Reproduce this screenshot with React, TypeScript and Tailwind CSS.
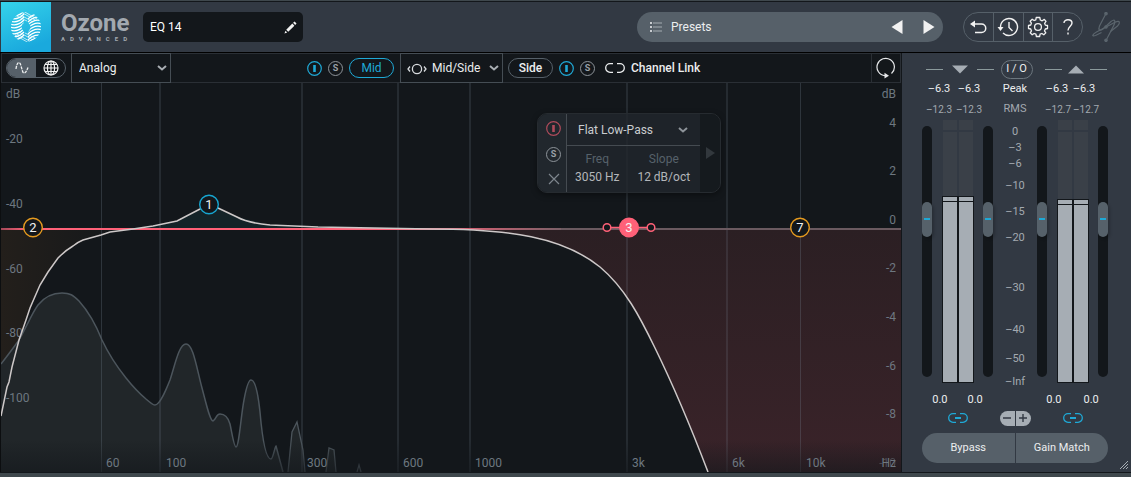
import { useState } from "react";

const freqGrid = [
  { x: 101, label: "60", tx: 106 },
  { x: 159, label: "100", tx: 166, wide: true },
  { x: 301, label: "300", tx: 307, wide: true },
  { x: 397, label: "600", tx: 403, wide: true },
  { x: 469, label: "1000", tx: 475, wide: true },
  { x: 626, label: "3k", tx: 632, wide: true },
  { x: 726, label: "6k", tx: 732, wide: true },
  { x: 800, label: "10k", tx: 806 },
];

const leftScale = [
  { y: 98, label: "dB" },
  { y: 143, label: "-20" },
  { y: 208, label: "-40" },
  { y: 273, label: "-60" },
  { y: 337, label: "-80" },
  { y: 402, label: "-100" },
];

const rightScale = [
  { y: 98, label: "dB" },
  { y: 127, label: "4" },
  { y: 175, label: "2" },
  { y: 224, label: "0" },
  { y: 272, label: "-2" },
  { y: 321, label: "-4" },
  { y: 370, label: "-6" },
  { y: 418, label: "-8" },
];

// gap is the share of the meter height above each label
const meterScale = [
  { label: "0", gap: 18 },
  { label: "–3", gap: 16 },
  { label: "–6", gap: 16 },
  { label: "–10", gap: 22 },
  { label: "–15", gap: 26 },
  { label: "–20", gap: 26 },
  { label: "–30", gap: 50 },
  { label: "–40", gap: 42 },
  { label: "–50", gap: 29 },
  { label: "–Inf", gap: 23 },
];

const spectrum =
  "M1 364 C8 355 14 347 19 340 C26 328 32 313 38 305 C46 295 55 293 62 293 C70 293 73 295 79 301 C88 311 96 325 102 340 C110 357 118 368 126 378 C134 388 140 394 146 399 C150 402 152 405 155 405 C160 405 166 390 170 380 C175 365 179 344 186 344 C193 344 196 365 202 388 C206 403 210 421 213 421 C216 420 216 414 220 414 C224 414 228 417 230 424 C232 433 234 447 236 447 C239 447 241 415 244 400 C246 389 248 380 251 380 C255 380 258 393 260 412 C262 435 265 459 271 459 C273 459 275 446 276 446 L283 472";

const curve =
  "M1 416 L7 387 L9 382 L12 367 L19 340 L26 320 L30 308 L40 285 L48 272 L58 258 Q66 250 73 246 Q78 242 83 240 L101 235 L110 232 L133 229 L153 226 L177 221 L200 209 Q209 203 218 208 L237 217 Q248 223 270 225 L318 227 L430 229 C510 229 563 237 600 267 C625 288 640 317 655 348 C678 395 692 430 708 472";

const thumb =
  "[&::-webkit-slider-thumb]:appearance-none [&::-webkit-slider-thumb]:w-[10px] [&::-webkit-slider-thumb]:h-[35px] [&::-webkit-slider-thumb]:rounded-full [&::-webkit-slider-thumb]:bg-[#56616a] [&::-webkit-slider-thumb]:bg-[linear-gradient(#1fa9d6,#1fa9d6)] [&::-webkit-slider-thumb]:bg-[length:6px_2px] [&::-webkit-slider-thumb]:bg-center [&::-webkit-slider-thumb]:bg-no-repeat [&::-webkit-slider-thumb]:shadow-[2px_2px_3px_#0003]";

function Chevron({ className }: { className: string }) {
  return (
    <svg className={className} width="10" height="6" viewBox="0 0 10 6" fill="none" stroke="currentColor" strokeWidth="2">
      <path d="M1 1 L5 4.5 L9 1" />
    </svg>
  );
}

function PowerButton({ label, className = "text-[#1fa9d6]" }: { label: string; className?: string }) {
  return (
    <button aria-label={label} className={className}>
      <svg width="15" height="15" viewBox="0 0 15 15" fill="none" stroke="currentColor">
        <circle cx="7.5" cy="7.5" r="6.8" strokeWidth="1.2" />
        <path d="M7.5 4 V11" strokeWidth="2.6" />
      </svg>
    </button>
  );
}

function SoloButton({ label }: { label: string }) {
  return (
    <button
      aria-label={label}
      className="w-[15px] h-[15px] rounded-full border border-[#8d9399] text-[#9aa0a6] text-[9px] leading-[13px] font-bold"
    >
      S
    </button>
  );
}

function OzoneLogo() {
  const rows = [-13, -10, -7, -4, -1, 2, 5, 8, 11];
  return (
    <svg width="50" height="50" viewBox="0 0 50 50">
      <defs>
        <linearGradient id="logoBg" x1="0" y1="0" x2="0.4" y2="1">
          <stop offset="0" stopColor="#35d3ea" />
          <stop offset="1" stopColor="#1aa9dd" />
        </linearGradient>
        <mask id="ring">
          <circle cx="25" cy="25" r="15" fill="white" />
          <circle cx="25" cy="25" r="4.5" fill="black" />
        </mask>
      </defs>
      <rect width="50" height="50" fill="url(#logoBg)" />
      <g mask="url(#ring)" fill="none" stroke="white" strokeWidth="1.3">
        {rows.map((r) => (
          <path key={r} d={`M9 ${26 + r} C14 ${28 + r} 18 ${27 + r} 23 ${22 + r}`} />
        ))}
        {rows.map((r) => (
          <path key={r} d={`M41 ${24 - r} C36 ${22 - r} 32 ${23 - r} 27 ${28 - r}`} />
        ))}
        <g strokeWidth="0.7">
          <path d="M20 10 L34 18 M22 9 L36 17 M18 12 L32 20 M16 14 L26 19" />
          <path d="M30 40 L16 32 M28 41 L14 33 M32 38 L18 30 M34 36 L24 31" />
        </g>
      </g>
    </svg>
  );
}

function LinkIcon({ active = false }: { active?: boolean }) {
  return (
    <svg width="20" height="10" viewBox="0 0 20 10" fill="none" stroke="currentColor" strokeWidth="1.3">
      <path d="M8 0.7 H5 A4.3 4.3 0 0 0 5 9.3 H8 M12 0.7 H15 A4.3 4.3 0 0 1 15 9.3 H12" />
      {active && <path d="M7 5 H13" strokeWidth="2" />}
    </svg>
  );
}

function Header() {
  const [preset, setPreset] = useState("EQ 14");
  return (
    <header className="flex items-center h-[50px] pl-px pr-[10px] bg-[#323943]">
      <OzoneLogo />
      <div className="w-[82px] ml-[10px] text-[#a3a9b0]">
        <div className="font-bold text-[24px] leading-[24px]">Ozone</div>
        <div className="text-[6px] leading-[8px] font-bold tracking-[5px]">ADVANCED</div>
      </div>
      <div className="flex items-center w-[160px] h-[30px] pl-[7px] pr-[6px] rounded-[5px] bg-[#13171b]">
        <input
          aria-label="Preset name"
          value={preset}
          onChange={(e) => setPreset(e.target.value)}
          className="flex-1 min-w-0 bg-transparent text-[12px] text-white outline-none"
        />
        <button aria-label="Rename">
          <svg width="13" height="13" viewBox="0 0 14 14" fill="#f2f2f2">
            <path d="M0.5 13.5 L1.6 10.6 L3.4 12.4 Z M2.4 9.4 L9 2.8 L11.2 5 L4.6 11.6 Z M9.8 2 L11.4 0.5 L13.5 2.6 L12 4.2 Z" />
          </svg>
        </button>
      </div>
      <div className="flex items-center w-[306px] h-[30px] ml-auto px-2 pl-[13px] rounded-full bg-[#566069]">
        <button className="flex items-center gap-[9px] text-[12px] text-[#eceeef]">
          <svg width="12" height="10" viewBox="0 0 12 10">
            <path d="M0 1 H2 M0 5 H2 M0 9 H2" stroke="#c8ccd0" strokeWidth="2" />
            <path d="M3 1 H12 M3 5 H12 M3 9 H12" stroke="#8b9299" strokeWidth="1.4" />
          </svg>
          Presets
        </button>
        <button aria-label="Previous preset" className="ml-auto">
          <svg width="12" height="14" viewBox="0 0 12 14" fill="#f2f2f2">
            <path d="M11.5 0 V14 L0.5 7 Z" />
          </svg>
        </button>
        <button aria-label="Next preset" className="ml-5">
          <svg width="12" height="14" viewBox="0 0 12 14" fill="#f2f2f2">
            <path d="M0.5 0 V14 L11.5 7 Z" />
          </svg>
        </button>
      </div>
      <div className="flex w-[120px] h-[30px] ml-5 rounded-full border border-[#566069] divide-x divide-[#566069] text-[#f2f2f2]">
        <button aria-label="Undo" className="flex-1 flex items-center justify-center">
          <svg width="18" height="14" viewBox="0 0 18 14" fill="none" stroke="currentColor" strokeWidth="1.5">
            <path d="M3 4 H12.5 A4 4 0 0 1 12.5 12.5 H6" />
            <path d="M1 4 L6 0.5 V7.5 Z" fill="currentColor" stroke="none" />
          </svg>
        </button>
        <button aria-label="History" className="flex-1 flex items-center justify-center">
          <svg width="22" height="20" viewBox="0 0 22 20" fill="none" stroke="currentColor" strokeWidth="1.4">
            <path d="M3.5 10 A8.5 8.5 0 1 1 6 16" />
            <path d="M0.5 10 H6.5 L3.5 14 Z" fill="currentColor" stroke="none" />
            <path d="M12 5 V10.5 L15.5 14" />
          </svg>
        </button>
        <button aria-label="Settings" className="flex-1 flex items-center justify-center">
          <svg width="22" height="22" viewBox="0 0 22 22" fill="none" stroke="currentColor" strokeWidth="1.3" strokeLinejoin="round">
            <circle cx="11" cy="11" r="3.4" />
            <path d="M9.2 1.5 H12.8 L13.3 4 L15.2 4.8 L17.3 3.4 L19 5.4 L17.6 7.3 L18.3 9.1 L20.5 9.5 V12.5 L18.3 13 L17.5 14.9 L18.8 16.9 L16.8 18.8 L14.9 17.5 L13.1 18.2 L12.6 20.5 H9.4 L8.9 18.2 L7.1 17.5 L5.2 18.8 L3.2 16.8 L4.5 14.9 L3.7 13 L1.5 12.5 V9.5 L3.7 9 L4.4 7.1 L3.1 5.2 L5.2 3.2 L7.1 4.5 L8.8 3.8 Z" />
          </svg>
        </button>
        <button aria-label="Help" className="flex-1 flex items-center justify-center">
          <svg width="10" height="16" viewBox="0 0 10 16" fill="none" stroke="currentColor" strokeWidth="1.4">
            <path d="M1 4 C1 -0.3 9 -0.3 9 4 C9 7 5 7.5 5 11.5 M5 13.5 V15.5" />
          </svg>
        </button>
      </div>
      <svg className="ml-2" width="30" height="30" viewBox="0 0 30 30" fill="none" stroke="#5b656d" strokeWidth="1.2">
        <path d="M15 1.5 L8.5 14 C7 18 8.5 19.5 12 17 L20 9.5 C24 6.5 25 9 22.5 14 L15 28.5" />
        <path d="M15 15 L24.5 10 C29 8 29.5 11 26.5 14 L19.5 19.5" />
        <path d="M15 15 L5.5 20 C1 22.5 0.5 25 4.5 23.5 L10.5 20.5" />
        <circle cx="15" cy="1.7" r="1.2" fill="#5b656d" />
        <circle cx="15" cy="28.3" r="1.2" fill="#5b656d" />
        <circle cx="15" cy="15" r="1.2" fill="#5b656d" />
      </svg>
    </header>
  );
}

function Toolbar() {
  return (
    <div className="flex items-center h-[30px] border border-[#2a2f35] bg-[#13171b] text-[12px] text-[#eceeef]">
      <div className="flex w-[60px] h-5 ml-1 rounded-full border border-[#566069] overflow-hidden">
        <button aria-label="Curve view" className="flex-1 flex items-center justify-center bg-[#566069]">
          <svg width="14" height="12" viewBox="0 0 14 12" fill="none" stroke="#eceeef" strokeWidth="1.3">
            <path d="M1 7 C2 -1 5 -1 6 4 L7.5 9 C8.5 13 11 11 13 5.5" strokeDasharray="3 1" />
          </svg>
        </button>
        <button aria-label="Global view" className="flex-1 flex items-center justify-center">
          <svg width="16" height="16" viewBox="0 0 16 16" fill="none" stroke="#f2f2f2" strokeWidth="1.2">
            <circle cx="8" cy="8" r="7" />
            <ellipse cx="8" cy="8" rx="3.6" ry="7" />
            <path d="M8 1 V15 M1 8 H15 M2 4.5 H14 M2 11.5 H14" />
          </svg>
        </button>
      </div>
      <div className="relative w-[100px] h-[30px] ml-[5px]">
        <select aria-label="EQ mode" className="appearance-none w-full h-full pl-[7px] bg-transparent border border-[#454d54]">
          <option>Analog</option>
        </select>
        <Chevron className="absolute right-1 top-3 pointer-events-none text-[#a9aeb3]" />
      </div>
      <div className="flex items-center ml-[136px]">
        <PowerButton label="Mid on" />
        <span className="ml-[6px] flex">
          <SoloButton label="Solo mid" />
        </span>
        <button className="w-[45px] h-5 ml-[6px] rounded-full border border-[#1fa9d6] text-[#1fa9d6] leading-[18px]">Mid</button>
        <div className="relative w-[103px] h-[30px] ml-[6px]">
          <svg className="absolute left-[7px] top-[10px] pointer-events-none" width="20" height="12" viewBox="0 0 20 12" fill="none" stroke="#d8dbde" strokeWidth="1.3">
            <circle cx="10" cy="6" r="4.6" />
            <path d="M3 3.5 L1 6 L3 8.5 M17 3.5 L19 6 L17 8.5" />
          </svg>
          <select aria-label="Channel mode" className="appearance-none w-full h-full pl-[31px] bg-transparent border border-[#454d54]">
            <option>Mid/Side</option>
          </select>
          <Chevron className="absolute right-1 top-3 pointer-events-none text-[#a9aeb3]" />
        </div>
        <button className="w-[45px] h-5 ml-[5px] rounded-full border border-[#566069] font-medium leading-[18px]">Side</button>
        <span className="ml-[6px] flex gap-[6px]">
          <PowerButton label="Side on" />
          <SoloButton label="Solo side" />
        </span>
        <button className="flex items-center gap-[6px] ml-[10px] font-medium">
          <LinkIcon />
          Channel Link
        </button>
      </div>
      <button aria-label="Reset" className="flex items-center justify-center w-[29px] h-[30px] ml-auto border-l border-[#2a2f35]">
        <svg width="20" height="22" viewBox="0 0 20 22" fill="none" stroke="#e6e8ea" strokeWidth="1.2">
          <path d="M15.5 16.5 A8.7 8.7 0 1 0 9 18.7" />
          <path d="M8.5 15.8 L13 18.7 L8.5 21.5 Z" fill="#e6e8ea" stroke="none" />
        </svg>
      </button>
    </div>
  );
}

function EqNode({ x, y = 227, n, color, filled = false }: { x: number; y?: number; n: string; color: string; filled?: boolean }) {
  return (
    <g>
      <circle cx={x} cy={y + 0.5} r="9.3" fill={filled ? color : "#13171b"} stroke={color} strokeWidth="1.4" />
      <text x={x} y={y + 5} textAnchor="middle" fontSize="13" fill="#f2f2f2">
        {n}
      </text>
    </g>
  );
}

function FilterPanel() {
  return (
    <div className="absolute left-[536px] top-[30px] flex w-[184px] h-[80px] rounded-[10px] border border-[#262b30] shadow-[0_2px_6px_#0006] overflow-hidden text-[12px]">
      <div className="flex flex-col items-center justify-between w-[29px] py-[7px] pl-[3px] bg-[#262c32]/80 border-r border-[#454b51]">
        <PowerButton label="Band on" className="text-[#b04b5b]" />
        <SoloButton label="Solo band" />
        <button aria-label="Remove band">
          <svg width="12" height="12" viewBox="0 0 12 12" stroke="#7d858c" strokeWidth="1.2">
            <path d="M1 1 L11 11 M11 1 L1 11" />
          </svg>
        </button>
      </div>
      <div className="flex-1 bg-[#22272d]/80">
        <div className="relative h-[32px] border-b border-[#454b51]">
          <select aria-label="Filter type" className="appearance-none w-full h-full pl-[11px] bg-transparent text-[#c9cccf]">
            <option>Flat Low-Pass</option>
          </select>
          <Chevron className="absolute right-3 top-[13px] pointer-events-none text-[#8d9399]" />
        </div>
        <div className="grid grid-cols-2 pt-[4px] text-center leading-[18px]">
          <label htmlFor="freq" className="text-[#56616a] pr-[6px]">Freq</label>
          <label htmlFor="slope" className="text-[#56616a] pr-[6px]">Slope</label>
          <input id="freq" defaultValue="3050 Hz" className="w-full min-w-0 pr-[6px] bg-transparent text-center text-[#b3b6b9]" />
          <input id="slope" defaultValue="12 dB/oct" className="w-full min-w-0 pr-[6px] bg-transparent text-center text-[#b3b6b9]" />
        </div>
      </div>
      <button aria-label="More" className="flex items-center pl-[6px] w-[20px] bg-[#171b1f]/80">
        <svg width="9" height="12" viewBox="0 0 9 12" fill="#32383d">
          <path d="M0 0 V12 L9 6 Z" />
        </svg>
      </button>
    </div>
  );
}

function Spectrum() {
  return (
    <div className="relative">
      <svg className="block w-full h-auto" viewBox="1 83 900 389" fontFamily="Roboto, sans-serif">
        <defs>
          <linearGradient id="lowPass" x1="0" y1="0" x2="0" y2="1">
            <stop offset="0" stopColor="#2b1f23" />
            <stop offset="1" stopColor="#3a2329" />
          </linearGradient>
          <linearGradient id="fade" x1="0" y1="0" x2="0" y2="1">
            <stop offset="0" stopColor="#13171b" stopOpacity="0" />
            <stop offset="1" stopColor="#13171b" stopOpacity="0.6" />
          </linearGradient>
          <linearGradient id="lowCut" x1="0" y1="0" x2="1" y2="0">
            <stop offset="0" stopColor="#231f1b" />
            <stop offset="1" stopColor="#13171b" />
          </linearGradient>
          <linearGradient id="baseLine" gradientUnits="userSpaceOnUse" x1="0" y1="0" x2="560" y2="0">
            <stop offset="0" stopColor="#a04858" />
            <stop offset="0.05" stopColor="#ff6178" />
            <stop offset="0.75" stopColor="#ff6178" />
            <stop offset="1" stopColor="#7c6068" />
          </linearGradient>
        </defs>
        <rect x="1" y="83" width="900" height="389" fill="#13171b" />
        <path d="M1 229 H133 L101 235 L83 240 L73 246 L58 258 L48 272 L40 285 L30 308 L19 340 L7 387 L1 416 Z" fill="url(#lowCut)" />
        <path d="M140 228 L177 221 L200 209 L209 204 L218 208 L237 217 L270 225 L300 228 Z" fill="#142328" />
        <path d="M430 229 C510 229 563 237 600 267 C625 288 640 317 655 348 C678 395 692 430 708 472 H901 V229 Z" fill="url(#lowPass)" />
        <path d={spectrum + " L1 472 Z"} fill="#212629" />
        <path d="M288 472 L292 432 L297 422 L303 450 L305 472 Z M326 472 L329 448 L334 450 L336 472 Z" fill="#212629" />
        {freqGrid.map((g) => (
          <rect key={g.x} x={g.x} y="83" width={g.wide ? 2 : 1} height="389" fill="#8090a0" opacity={g.wide ? 0.17 : 0.25} />
        ))}
        <g fontSize="12" fill="#6d7780">
          {leftScale.map((s) => (
            <text key={s.label} x="6" y={s.y}>{s.label}</text>
          ))}
          {rightScale.map((s) => (
            <text key={s.label} x="896" y={s.y} textAnchor="end">{s.label}</text>
          ))}
        </g>
        <path d={spectrum} fill="none" stroke="#4c555c" strokeWidth="1.5" />
        <path d="M288 472 L292 432 L297 422 L303 450 L305 472 M326 472 L329 448 L334 450 L336 472 M357 472 L359 465 L361 472" fill="none" stroke="#4c555c" strokeWidth="1.3" />
        <rect x="1" y="440" width="900" height="32" fill="url(#fade)" />
        <g fontSize="12" fill="#6d7780">
          {freqGrid.map((g) => (
            <text key={g.x} x={g.tx} y="467">{g.label}</text>
          ))}
          <text x="896" y="467" textAnchor="end" opacity="0.5">-10</text>
          <text x="896" y="467" textAnchor="end">Hz</text>
        </g>
        <rect x="1" y="228" width="900" height="2" fill="#6b5a60" />
        <rect x="1" y="228" width="560" height="2" fill="url(#baseLine)" />
        <path d={curve} fill="none" stroke="#cdc8c8" strokeWidth="1.5" />
        <g stroke="#ff6178" strokeWidth="1.5">
          <path d="M611 227.5 H647" />
          <circle cx="607" cy="227.5" r="3.8" fill="#13171b" />
          <circle cx="651" cy="227.5" r="3.8" fill="#13171b" />
        </g>
        <EqNode x={33} n="2" color="#e59a1f" />
        <EqNode x={209} y={204} n="1" color="#17a5d0" />
        <EqNode x={629} n="3" color="#ff6178" filled />
        <EqNode x={800} n="7" color="#e59a1f" />
      </svg>
      <FilterPanel />
    </div>
  );
}

function Fader({ label }: { label: string }) {
  const [value, setValue] = useState(65);
  return (
    <input
      type="range"
      aria-label={label}
      value={value}
      onChange={(e) => setValue(Number(e.target.value))}
      className={"appearance-none w-[10px] mt-[6px] mb-[6px] rounded-full bg-[#13171b] [writing-mode:vertical-lr] [direction:rtl] " + thumb}
    />
  );
}

function Channel({ name, level }: { name: string; level: number }) {
  return (
    <div className="flex justify-between pb-[5px]">
      <Fader label={`${name} left gain`} />
      <div className="flex w-[32px]">
        {[0, 1].map((i) => (
          <div key={i} className="flex-1 flex flex-col">
            <div className="h-[10px] mx-px bg-[#3a4048]" />
            <div className="flex-1 mt-[2px] mx-px bg-[#3a4048]" />
            <div className="border border-[#13171b] bg-[#a6adb4]" style={{ height: `${level}%` }}>
              <div className="h-[5px] border-b border-[#13171b]" />
            </div>
          </div>
        ))}
      </div>
      <Fader label={`${name} right gain`} />
    </div>
  );
}

function IoPanel() {
  return (
    <aside className="flex flex-col w-[230px] pt-[7px] pb-[9px] pl-[20px] pr-[23px] border-l border-[#13171b] bg-[#323943] text-[11px] text-[#eceeef]">
      <div className="flex items-center h-[19px]">
        <div className="flex-1 flex items-center gap-[9px] pl-1">
          <i className="w-[17px] h-px bg-[#8b9a9c]" />
          <svg width="16" height="9" viewBox="0 0 16 9" fill="#a6adb4"><path d="M0 0.5 H16 L8 8.5 Z" /></svg>
          <i className="w-[17px] h-px bg-[#8b9a9c]" />
        </div>
        <button className="w-[32px] h-[19px] rounded-full border border-[#6b757d]">I / O</button>
        <div className="flex-1 flex items-center justify-end gap-[6px] pr-px">
          <i className="w-[17px] h-px bg-[#8b9a9c]" />
          <svg width="16" height="9" viewBox="0 0 16 9" fill="#a6adb4"><path d="M0 8.5 H16 L8 0.5 Z" /></svg>
          <i className="w-[17px] h-px bg-[#8b9a9c]" />
        </div>
      </div>
      <div className="grid grid-cols-[71px_1fr_71px] items-center h-5 text-center whitespace-nowrap">
        <div className="flex gap-[6px] pl-[5px]">
          <span className="w-6">–6.3</span>
          <span className="w-6">–6.3</span>
        </div>
        <span>Peak</span>
        <div className="flex gap-[3px] pl-2">
          <span className="w-6">–6.3</span>
          <span className="w-6">–6.3</span>
        </div>
      </div>
      <div className="grid grid-cols-[71px_1fr_71px] items-center h-5 text-center text-[#a3a9b0] whitespace-nowrap">
        <div className="flex gap-1 pl-1 text-[10px]">
          <span className="w-[26px]">–12.3</span>
          <span className="w-[26px]">–12.3</span>
        </div>
        <span>RMS</span>
        <div className="flex gap-[2px] pl-2 text-[10px]">
          <span className="w-[26px]">–12.7</span>
          <span className="w-[26px]">–12.7</span>
        </div>
      </div>
      <div className="flex-1 grid grid-cols-[71px_1fr_71px] mt-px">
        <Channel name="Input" level={71} />
        <div className="flex flex-col text-center text-[#a3a9b0]">
          {meterScale.map((s) => (
            <div key={s.label} className="flex flex-col justify-end basis-0 leading-[12px]" style={{ flexGrow: s.gap }}>
              {s.label}
            </div>
          ))}
        </div>
        <Channel name="Output" level={70} />
      </div>
      <div className="grid grid-cols-[71px_1fr_71px] items-center h-5 mt-[2px] text-center">
        <div className="flex justify-center gap-[20px]">
          <span>0.0</span>
          <span>0.0</span>
        </div>
        <span />
        <div className="flex justify-center gap-[22px]">
          <span>0.0</span>
          <span>0.0</span>
        </div>
      </div>
      <div className="grid grid-cols-[71px_1fr_71px] justify-items-center items-center h-4 text-[#1fa9d6]">
        <button aria-label="Link input"><LinkIcon active /></button>
        <div className="flex w-[31px] h-[15px] gap-px rounded-full overflow-hidden text-[#323943]">
          <button aria-label="Zoom out" className="flex-1 flex items-center justify-center bg-[#a6adb4]">
            <svg width="8" height="8" stroke="currentColor" strokeWidth="1.4"><path d="M0 4 H8" /></svg>
          </button>
          <button aria-label="Zoom in" className="flex-1 flex items-center justify-center bg-[#a6adb4]">
            <svg width="8" height="8" stroke="currentColor" strokeWidth="1.4"><path d="M0 4 H8 M4 0 V8" /></svg>
          </button>
        </div>
        <button aria-label="Link output"><LinkIcon active /></button>
      </div>
      <div className="flex gap-px h-[30px] mt-[7px] rounded-full overflow-hidden">
        <button className="flex-1 bg-[#566069]">Bypass</button>
        <button className="flex-1 bg-[#566069]">Gain Match</button>
      </div>
    </aside>
  );
}

function App() {
  return (
    <div className="relative flex flex-col min-h-screen bg-[#3a4249] font-['Roboto',sans-serif]">
      <div className="h-[2px] bg-[#3f484d] border-b border-[#13171b]" />
      <Header />
      <main className="flex border-t border-black bg-[#0c0e10]">
        <div className="flex-1 min-w-0 pl-px">
          <Toolbar />
          <Spectrum />
        </div>
        <IoPanel />
      </main>
      <footer className="flex-1 border-t border-[#13171b] bg-[#3f484d]" />
      <svg className="absolute right-[3px] bottom-2" width="8" height="8" viewBox="0 0 8 8" stroke="#a6adb4">
        <path d="M0 8 L8 0 M3 8 L8 3 M6 8 L8 6" />
      </svg>
    </div>
  );
}

export default App;
